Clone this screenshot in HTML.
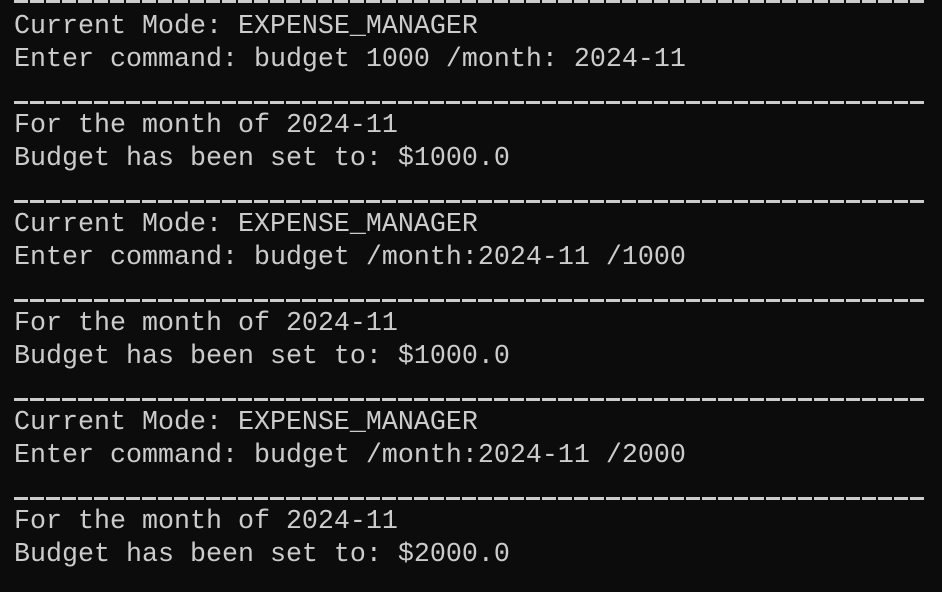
<!DOCTYPE html>
<html><head><style>
html,body{margin:0;padding:0;background:#0c0c0c;width:942px;height:592px;overflow:hidden;position:relative}
pre{position:absolute;left:14px;top:-22px;margin:0;font-family:"Liberation Mono",monospace;font-size:26.67px;line-height:33px;color:#cccccc;white-space:pre}
.d{position:absolute;left:14px;width:912px;height:3px;background:repeating-linear-gradient(90deg,#cccccc 0 14px,transparent 14px 16px)}
</style></head><body>
<div class="d" style="top:0"></div>
<div class="d" style="top:101px"></div>
<div class="d" style="top:200px"></div>
<div class="d" style="top:299px"></div>
<div class="d" style="top:398px"></div>
<div class="d" style="top:497px"></div>
<pre> 
Current Mode: EXPENSE_MANAGER
Enter command: budget 1000 /month: 2024-11
 
For the month of 2024-11
Budget has been set to: $1000.0
 
Current Mode: EXPENSE_MANAGER
Enter command: budget /month:2024-11 /1000
 
For the month of 2024-11
Budget has been set to: $1000.0
 
Current Mode: EXPENSE_MANAGER
Enter command: budget /month:2024-11 /2000
 
For the month of 2024-11
Budget has been set to: $2000.0
</pre></body></html>
